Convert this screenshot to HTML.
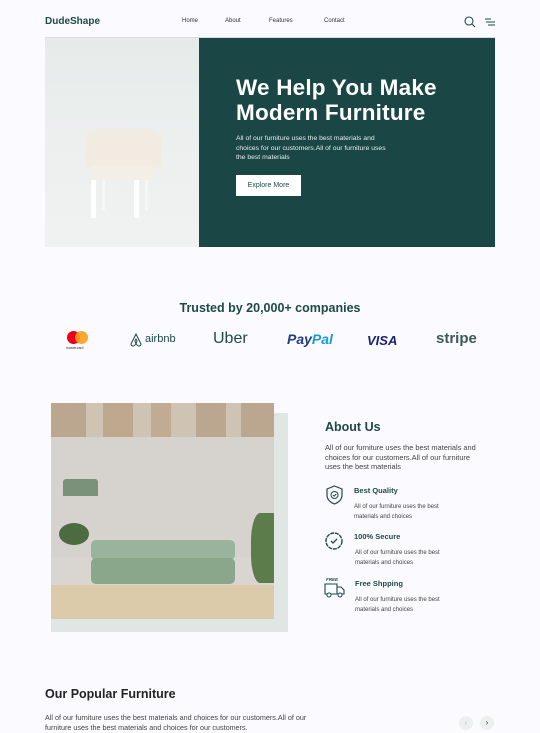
<!DOCTYPE html>
<html><head><meta charset="utf-8"><style>
*{margin:0;padding:0;box-sizing:border-box}
body{width:540px;height:730px;overflow:hidden;background:#fafaff;font-family:"Liberation Sans",sans-serif;position:relative;color:#333}
.a{position:absolute}
.nav{font-size:6px;color:#333;top:18px}
.g{color:#1d4a47}
p.s{font-size:7px;line-height:9.5px;color:#444}
</style></head><body>
<div class="a g" style="left:45px;top:16px;font-size:10px;font-weight:bold">DudeShape</div>
<div class="a nav" style="left:182px">Home</div>
<div class="a nav" style="left:225px">About</div>
<div class="a nav" style="left:269px">Features</div>
<div class="a nav" style="left:324px">Contact</div>
<svg class="a" style="left:464px;top:16px" width="12" height="12" viewBox="0 0 12 12"><circle cx="5" cy="5" r="4" fill="none" stroke="#1d4a47" stroke-width="1.1"/><line x1="8" y1="8" x2="11" y2="11" stroke="#1d4a47" stroke-width="1.1"/></svg>
<svg class="a" style="left:485px;top:18px" width="10" height="8" viewBox="0 0 10 8"><line x1="0" y1="1" x2="6" y2="1" stroke="#1d4a47"/><line x1="1" y1="4" x2="10" y2="4" stroke="#1d4a47"/><line x1="3" y1="7" x2="10" y2="7" stroke="#1d4a47"/></svg>
<div class="a" style="left:45px;top:37px;width:450px;height:1px;background:#d8dcdc"></div>

<div class="a" style="left:45px;top:38px;width:154px;height:209px;background:linear-gradient(180deg,#e6ebea,#edf0ef 60%,#f0f2f1)"></div>
<div class="a" style="left:85px;top:129px;width:76px;height:40px;background:#f1ebe2;border-radius:12px 12px 6px 6px"></div>
<div class="a" style="left:90px;top:165px;width:66px;height:14px;background:#f3eee6;border-radius:6px"></div>
<div class="a" style="left:91px;top:180px;width:5px;height:38px;background:#fff"></div>
<div class="a" style="left:134px;top:180px;width:5px;height:38px;background:#fff"></div>
<div class="a" style="left:102px;top:180px;width:3px;height:30px;background:#f6f6f6"></div>
<div class="a" style="left:145px;top:180px;width:3px;height:30px;background:#f6f6f6"></div>

<div class="a" style="left:199px;top:38px;width:296px;height:209px;background:#1a4645"></div>
<div class="a" style="left:236px;top:75px;color:#fff;font-size:22.5px;font-weight:bold;line-height:25px;letter-spacing:0.2px">We Help You Make<br>Modern Furniture</div>
<div class="a" style="left:236px;top:134px;color:#e8eeee;font-size:6.8px;line-height:9.5px;width:172px">All of our furniture uses the best materials and<br>choices for our customers.All of our furniture uses<br>the best materials</div>
<div class="a" style="left:236px;top:175px;width:65px;height:21px;background:#fff;color:#1d4a47;font-size:7px;text-align:center;line-height:21px">Explore More</div>

<div class="a g" style="left:0;width:540px;text-align:center;top:301px;font-size:12.5px;font-weight:bold">Trusted by 20,000+ companies</div>
<div class="a" style="left:67px;top:331px;width:13px;height:13px;border-radius:50%;background:#eb001b"></div>
<div class="a" style="left:75px;top:331px;width:13px;height:13px;border-radius:50%;background:#f79e1b;opacity:.9"></div>
<div class="a" style="left:66px;top:346px;font-size:3.5px;color:#333">mastercard</div>
<svg class="a" style="left:129px;top:333px" width="14" height="14" viewBox="0 0 14 14"><path d="M7 1 L2 11 Q2 13 4 13 Q6 13 7 10 Q8 13 10 13 Q12 13 12 11 Z M7 6 Q5 8 7 10 Q9 8 7 6" fill="none" stroke="#1d4a47" stroke-width="1"/></svg>
<div class="a g" style="left:145px;top:333px;font-size:11px">airbnb</div>
<div class="a g" style="left:213px;top:330px;font-size:16px">Uber</div>
<div class="a" style="left:287px;top:331px;font-size:14px;font-weight:bold;font-style:italic;color:#253b80">Pay<span style="color:#179bd7">Pal</span></div>
<div class="a" style="left:367px;top:333px;font-size:13px;font-weight:bold;font-style:italic;color:#1a1f71">VISA</div>
<div class="a" style="left:436px;top:330px;font-size:15px;font-weight:bold;color:#3b5b58">stripe</div>

<div class="a" style="left:51px;top:413px;width:237px;height:219px;background:#e0e6e4"></div>
<div class="a" style="left:51px;top:403px;width:223px;height:216px;background:#d9d6d2;overflow:hidden">
 <div class="a" style="left:0;top:0;width:223px;height:34px;background:#cfc4b4"></div>
 <div class="a" style="left:0;top:0;width:35px;height:34px;background:#bba78f"></div>
 <div class="a" style="left:52px;top:0;width:30px;height:34px;background:#bea98f"></div>
 <div class="a" style="left:100px;top:0;width:20px;height:34px;background:#c1ac93"></div>
 <div class="a" style="left:145px;top:0;width:30px;height:34px;background:#bba78f"></div>
 <div class="a" style="left:190px;top:0;width:33px;height:34px;background:#bba78f"></div>
 <div class="a" style="left:0;top:34px;width:223px;height:120px;background:#d6d3cf"></div>
 <div class="a" style="left:12px;top:76px;width:35px;height:17px;background:#7a917a;border-radius:3px 3px 0 0"></div>
 <div class="a" style="left:8px;top:120px;width:30px;height:22px;border-radius:50%;background:#4d6b40"></div>
 <div class="a" style="left:40px;top:137px;width:144px;height:20px;background:#9ab39c;border-radius:5px"></div>
 <div class="a" style="left:40px;top:155px;width:144px;height:26px;background:#8aa78c;border-radius:5px"></div>
 <div class="a" style="left:200px;top:110px;width:23px;height:70px;background:#5d7c4c;border-radius:40% 0 0 40%"></div>
 <div class="a" style="left:0;top:182px;width:223px;height:34px;background:#dccbaa"></div>
</div>

<div class="a g" style="left:325px;top:420px;font-size:12.5px;font-weight:bold">About Us</div>
<p class="a s" style="left:325px;top:443px;width:180px;font-size:7.4px">All of our furniture uses the best materials and<br>choices for our customers.All of our furniture<br>uses the best materials</p>
<svg class="a" style="left:325px;top:485px" width="19" height="20" viewBox="0 0 19 20"><path d="M9.5 1 L17 4 V10 Q17 16 9.5 19 Q2 16 2 10 V4 Z" fill="none" stroke="#1d4a47" stroke-width="1.2"/><circle cx="9.5" cy="10" r="3.5" fill="none" stroke="#1d4a47"/><path d="M8 10 l1.2 1.2 L11.2 9" fill="none" stroke="#1d4a47"/></svg>
<div class="a g" style="left:354px;top:486px;font-size:7.5px;font-weight:bold">Best Quality</div>
<p class="a s" style="left:354px;top:502px;font-size:6px;line-height:10px;width:108px">All of our furniture uses the best materials and choices</p>
<svg class="a" style="left:324px;top:531px" width="20" height="20" viewBox="0 0 20 20"><circle cx="10" cy="10" r="8" fill="none" stroke="#1d4a47" stroke-width="1.4" stroke-dasharray="4 0.8"/><path d="M7 10 l2 2 l4-4" fill="none" stroke="#1d4a47" stroke-width="1.3"/></svg>
<div class="a g" style="left:354px;top:532px;font-size:7.5px;font-weight:bold">100% Secure</div>
<p class="a s" style="left:355px;top:548px;font-size:6px;line-height:10px;width:108px">All of our furniture uses the best materials and choices</p>
<div class="a g" style="left:326px;top:577px;font-size:4.5px;font-weight:bold;font-style:italic">FREE</div>
<svg class="a" style="left:324px;top:583px" width="22" height="15" viewBox="0 0 22 15"><path d="M1 1 H13 V11 H1 Z M13 4 H17 L20 7 V11 H13" fill="none" stroke="#1d4a47" stroke-width="1.1"/><circle cx="5" cy="12" r="2" fill="#fafaff" stroke="#1d4a47"/><circle cx="16" cy="12" r="2" fill="#fafaff" stroke="#1d4a47"/></svg>
<div class="a g" style="left:355px;top:579px;font-size:7.5px;font-weight:bold">Free Shpping</div>
<p class="a s" style="left:355px;top:595px;font-size:6px;line-height:10px;width:108px">All of our furniture uses the best materials and choices</p>

<div class="a" style="left:45px;top:687px;font-size:12.5px;font-weight:bold;color:#222">Our Popular Furniture</div>
<p class="a s" style="left:45px;top:713px;width:300px;font-size:7.2px;line-height:10px">All of our furniture uses the best materials and choices for our customers.All of our<br>furniture uses the best materials and choices for our customers.</p>
<div class="a" style="left:459px;top:716px;width:14px;height:14px;border-radius:50%;background:#eef0ef;color:#bbb;font-size:8px;text-align:center;line-height:14px">‹</div>
<div class="a" style="left:480px;top:716px;width:14px;height:14px;border-radius:50%;background:#eef0ef;color:#333;font-size:8px;text-align:center;line-height:14px">›</div>
</body></html>
